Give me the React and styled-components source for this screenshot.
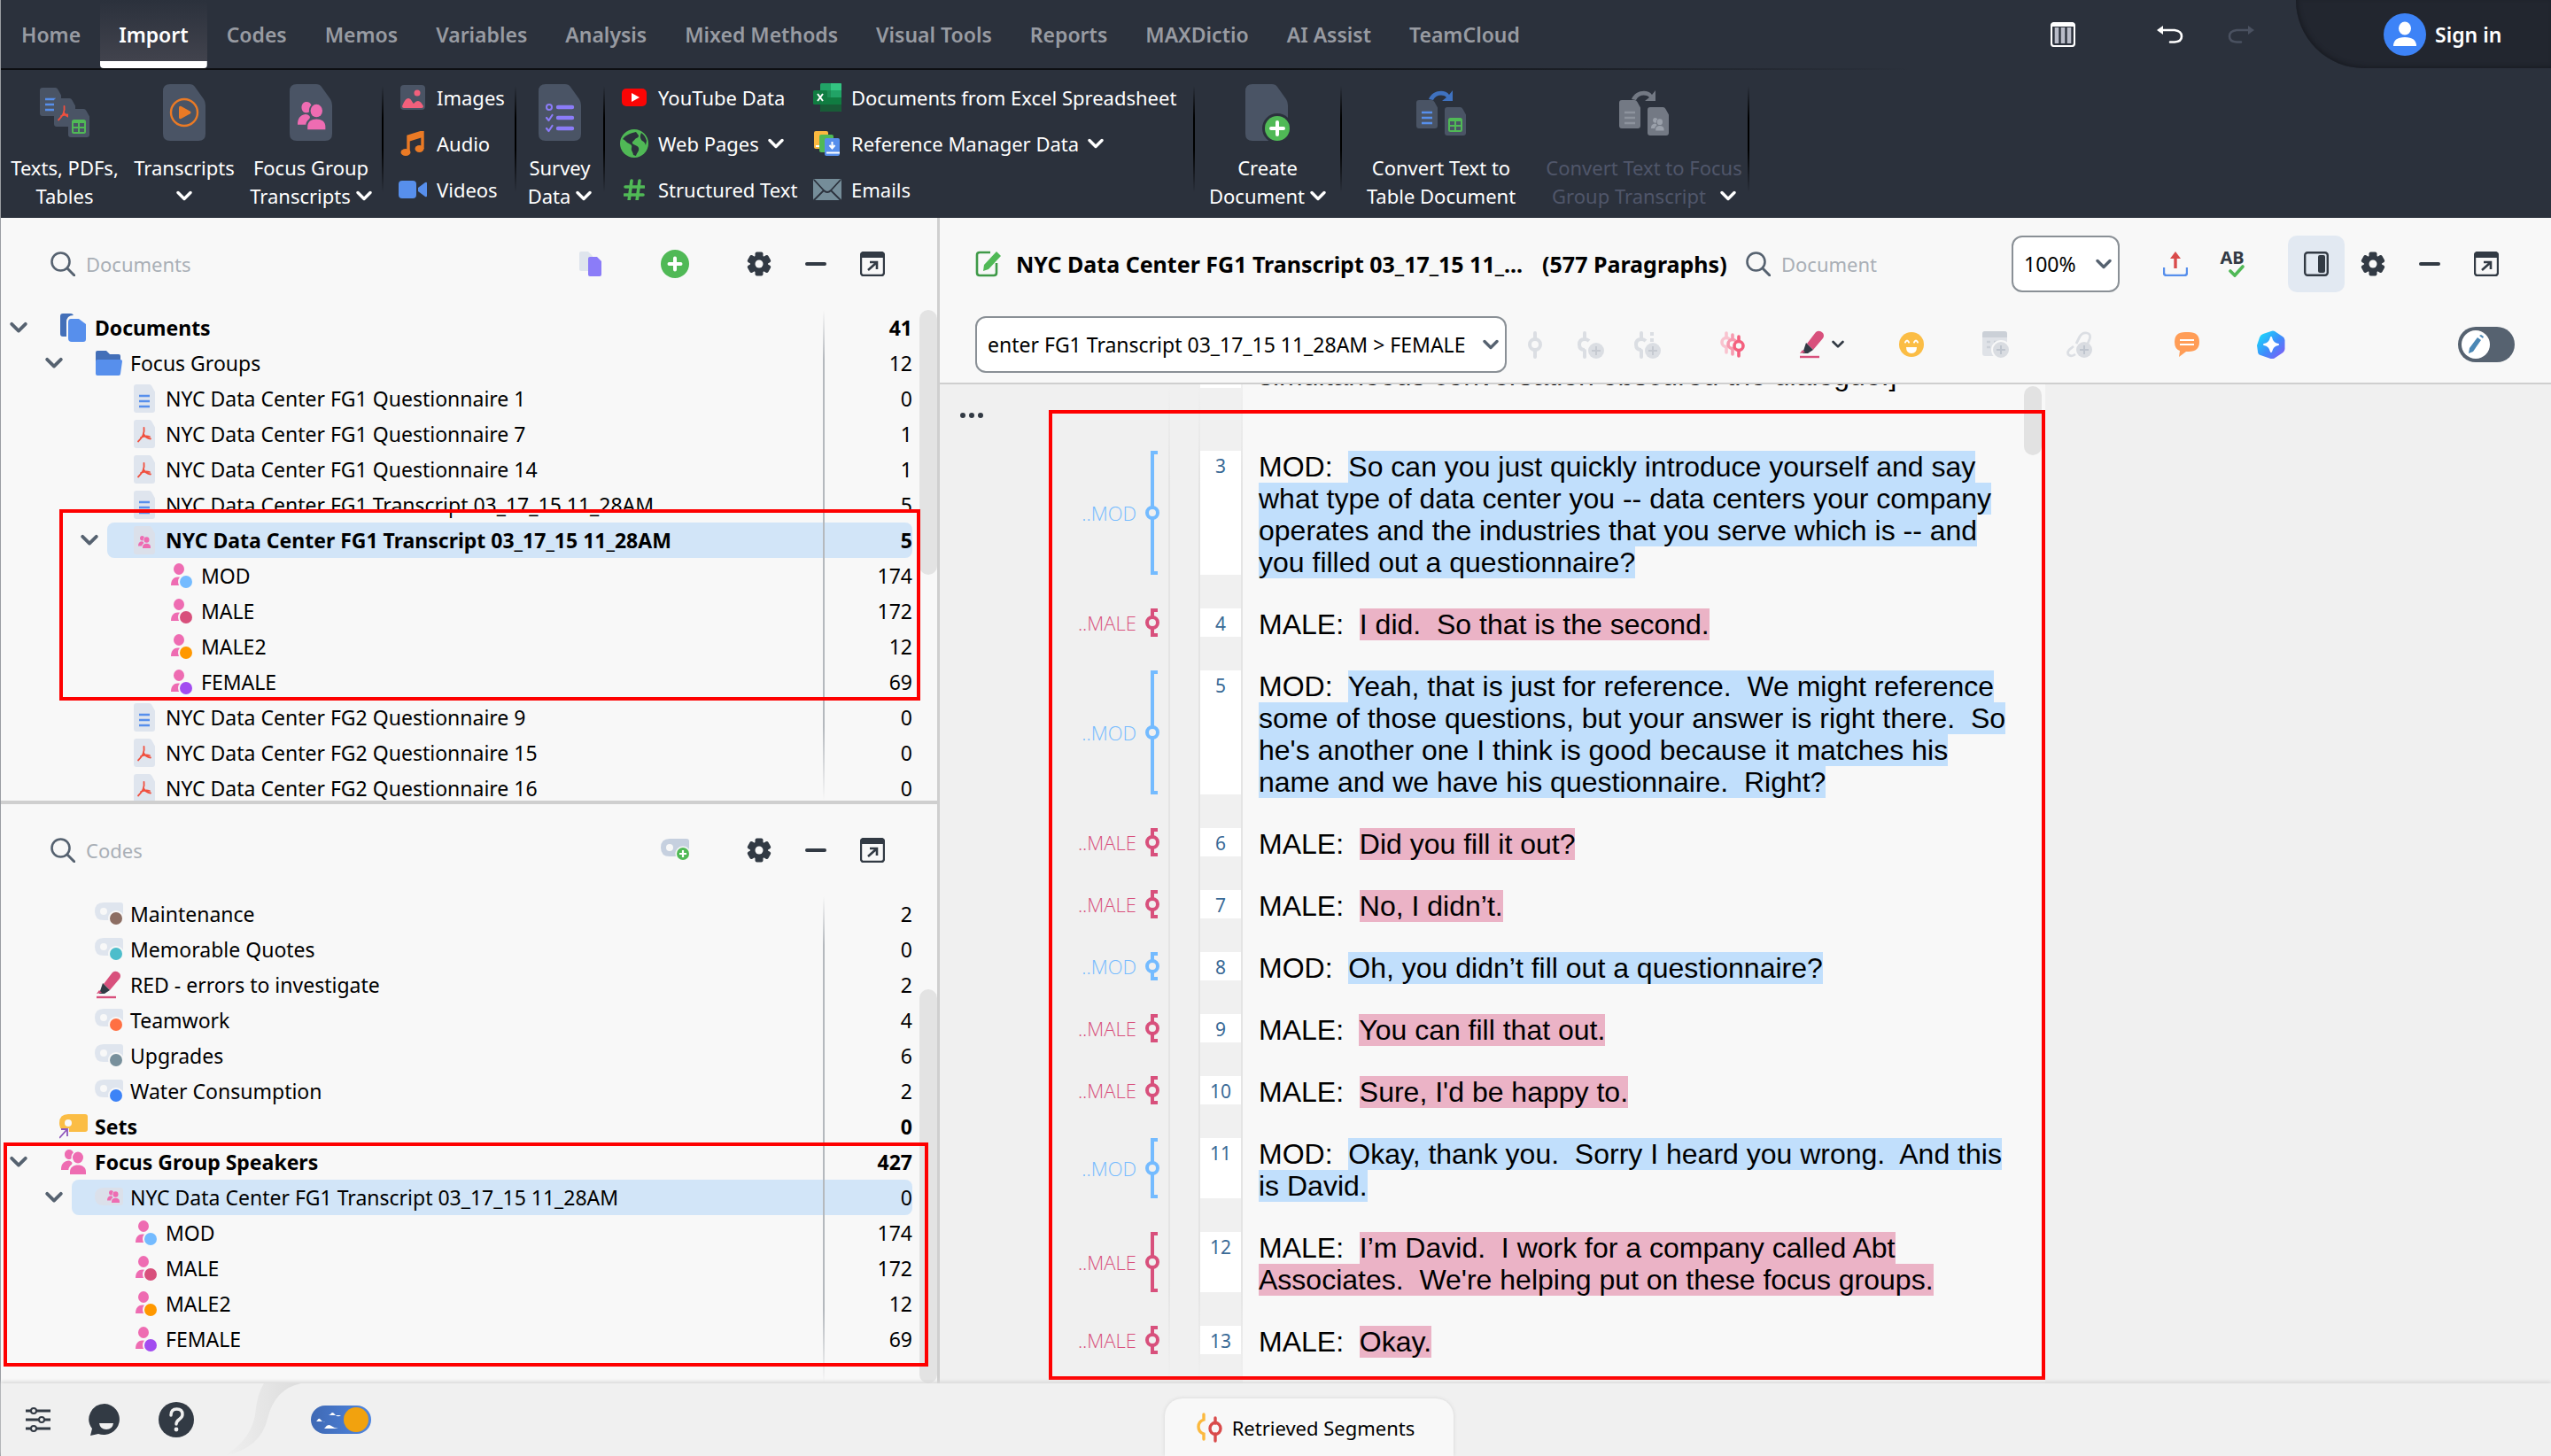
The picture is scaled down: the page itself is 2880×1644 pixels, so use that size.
import styled, { createGlobalStyle, css } from "styled-components";

const UI_FONT = `"Noto Sans", "Open Sans", sans-serif`;

const COLORS = {
  dark: "#2b313c",
  doc: "#4a5465",
  ink: "#323a44",
  slate: "#566270",
  green: "#50b956",
  blue: "#578fec",
  pink: "#ee6cb2",
  mod: "#74bbff",
  male: "#d8507c",
};

const HIGHLIGHTS = {
  MOD: "#c1dffc",
  MALE: "#ebb3c6",
};

const TABS = [
  "Home",
  "Import",
  "Codes",
  "Memos",
  "Variables",
  "Analysis",
  "Mixed Methods",
  "Visual Tools",
  "Reports",
  "MAXDictio",
  "AI Assist",
  "TeamCloud",
];

const SPEAKERS = [
  { label: "MOD", color: COLORS.mod, count: 174 },
  { label: "MALE", color: COLORS.male, count: 172 },
  { label: "MALE2", color: "#ff9800", count: 12 },
  { label: "FEMALE", color: "#a24cf0", count: 69 },
];

const TRANSCRIPT = "NYC Data Center FG1 Transcript 03_17_15 11_28AM";

// a non-breaking space before the ordinary one keeps the double gap after a full stop
const PARAGRAPHS = [
  {
    n: 3,
    who: "MOD",
    text: "So can you just quickly introduce yourself and say what type of data center you -- data centers your company operates and the industries that you serve which is -- and you filled out a questionnaire?",
  },
  { n: 4, who: "MALE", text: "I did.\u00a0 So that is the second." },
  {
    n: 5,
    who: "MOD",
    text: "Yeah, that is just for reference.\u00a0 We might reference some of those questions, but your answer is right there.\u00a0 So he's another one I think is good because it matches his name and we have his questionnaire.\u00a0 Right?",
  },
  { n: 6, who: "MALE", text: "Did you fill it out?" },
  { n: 7, who: "MALE", text: "No, I didn’t." },
  { n: 8, who: "MOD", text: "Oh, you didn’t fill out a questionnaire?" },
  { n: 9, who: "MALE", text: "You can fill that out." },
  { n: 10, who: "MALE", text: "Sure, I'd be happy to." },
  {
    n: 11,
    who: "MOD",
    text: "Okay, thank you.\u00a0 Sorry I heard you wrong.\u00a0 And this is David.",
  },
  {
    n: 12,
    who: "MALE",
    text: "I’m David.\u00a0 I work for a company called Abt Associates.\u00a0 We're helping put on these focus groups.",
  },
  { n: 13, who: "MALE", text: "Okay." },
];

/* ---------- icons ---------- */

const Icon = ({ w = 28, h = w, children, ...rest }) => (
  <svg width={w} height={h} viewBox={`0 0 ${w} ${h}`} fill="none" aria-hidden="true" {...rest}>
    {children}
  </svg>
);

const Chevron = ({ color = "#fff", w = 18 }) => (
  <svg width={w} height={w * 0.67} viewBox="0 0 18 12" fill="none" aria-hidden="true">
    <path d="M2 2.5 9 9.5 16 2.5" stroke={color} strokeWidth="3.4" strokeLinecap="round" strokeLinejoin="round" />
  </svg>
);

const Page = ({ x = 0, y = 0, w = 24, h = 32, fill = COLORS.doc }) => (
  <path
    d={`M${x + 3} ${y}h${w * 0.6}q2 0 3 2l${w * 0.4 - 6} ${h * 0.2}v${h * 0.8 - 5}q0 3-3 3h-${w - 6}q-3 0-3-3v-${h - 6}q0-3 3-3z`}
    fill={fill}
  />
);

const BigPage = () => (
  <path d="M8 0h22q4 0 6 3l10 14q2 3 2 7v32q0 8-8 8H8q-8 0-8-8V8q0-8 8-8z" fill={COLORS.doc} />
);

const Lines = ({ x, y, w = 12, gap = 6, color = COLORS.blue }) => (
  <path d={`M${x} ${y}h${w}M${x} ${y + gap}h${w}M${x} ${y + gap * 2}h${w}`} stroke={color} strokeWidth="2.4" />
);

const PdfMark = ({ x, y }) => (
  <path
    transform={`translate(${x} ${y})`}
    d="M7.5 1c.8 5-1.500 11-6.500 15.500M7 8c1.500 3 4 5 8 5.500M4 12c3-1.500 6-2 10-1"
    stroke="#f0503f"
    strokeWidth="1.8"
    strokeLinecap="round"
  />
);

const Grid = ({ x, y }) => (
  <g transform={`translate(${x} ${y})`}>
    <rect x="1" y="1" width="14" height="14" rx="1.500" stroke={COLORS.green} strokeWidth="2" />
    <path d="M1 3h14M1 9h14M8 2v13" stroke={COLORS.green} strokeWidth="2" />
  </g>
);

const People = ({ color = COLORS.pink }) => (
  <g fill={color}>
    <path d="M9 0c2.400 0 4.200 1.500 4.800 3.400C12 5 11.300 7.200 11.600 10 11 10.700 10 11 9 11 6 11 4 8.600 4 5.500S6 0 9 0z" />
    <ellipse cx="19" cy="9" rx="6" ry="6.500" />
    <path d="M0 23c0-6 2-9.500 8-10.500 1.600 0 3 .6 4 1.800.7 1.200.7 2-.5 3C9.400 19 8.500 20.700 8.300 23z" />
    <path d="M10 28v-3c0-5 4-7.500 9-7.500s9 2.500 9 7.500v3z" />
  </g>
);

const TextsIcon = () => (
  <Icon w={56} h={64}>
    <g transform="translate(0 4)">
      <Page />
      <Lines x={6} y={13} />
      <Page x={16} y={12} />
      <PdfMark x={20} y={20} />
      <Page x={32} y={24} />
      <Grid x={36} y={36} />
    </g>
  </Icon>
);

const TranscriptsIcon = () => (
  <Icon w={48} h={64}>
    <BigPage />
    <circle cx="24" cy="32" r="15" stroke="#ea7a25" strokeWidth="2.400" />
    <path d="M18 26.500q0-2.500 2.500-1.500l10 5.500q2 1.500 0 3l-10 5.500q-2.500 1-2.500-1.500z" fill="#ea7a25" />
  </Icon>
);

const FocusGroupIcon = () => (
  <Icon w={48} h={64}>
    <BigPage />
    <g transform="translate(9 20) scale(1.12)">
      <People />
    </g>
  </Icon>
);

const SurveyIcon = () => (
  <Icon w={48} h={64}>
    <BigPage />
    <g stroke="#8b7cf8" strokeLinecap="round" strokeLinejoin="round">
      <path d="M22 26h16M22 38h16M22 50h16" strokeWidth="4.400" />
      <circle cx="12" cy="26" r="3" strokeWidth="2" />
      <path d="m9 38 2.500 3 4-6M9 50l2.500 3 4-6" strokeWidth="2.200" />
    </g>
  </Icon>
);

const CreateIcon = () => (
  <Icon w={50} h={66}>
    <BigPage />
    <circle cx="36" cy="50" r="17" fill={COLORS.dark} />
    <circle cx="36" cy="50" r="14" fill={COLORS.green} />
    <path d="M36 43v14M29 50h14" stroke="#fff" strokeWidth="4" strokeLinecap="round" />
  </Icon>
);

const ConvertIcon = ({ off }) => (
  <Icon w={56} h={64}>
    <path
      d="M14 17C18 7 32 5 37 12l4-5v12H29l5-4C30 11 22 12 19 18z"
      fill={off ? "#737984" : "#3f72c0"}
    />
    <Page x={0} y={18} fill={off ? "#737984" : COLORS.doc} />
    <Lines x={6} y={32} color={off ? "#8d939d" : COLORS.blue} />
    <Page x={32} y={26} fill={off ? "#737984" : COLORS.doc} />
    {off ? (
      <g transform="translate(36 38) scale(0.52)">
        <People color="#9aa0aa" />
      </g>
    ) : (
      <Grid x={36} y={38} />
    )}
  </Icon>
);

const ImagesIcon = () => (
  <Icon>
    <rect width="28" height="28" rx="4" fill={COLORS.doc} />
    <circle cx="19" cy="9" r="3.500" fill="#f2607c" />
    <path d="M2 24c2-5 4-9 7-9s4 4 6 6c2-2 3-3 5-3s4 2 6 6q0 2-2 2H4q-2 0-2-2z" fill="#f2607c" />
  </Icon>
);

const AudioIcon = () => (
  <Icon>
    <path d="M9 24V6l16-5v19" stroke="#ea7a25" strokeWidth="3.400" />
    <path d="M9 6l16-5v6L9 12z" fill="#ea7a25" />
    <ellipse cx="6" cy="24" rx="5.500" ry="4" fill="#ea7a25" />
    <ellipse cx="21.500" cy="20" rx="5" ry="4" fill="#ea7a25" />
  </Icon>
);

const VideosIcon = () => (
  <Icon w={32} h={28}>
    <rect y="4" width="20" height="20" rx="4" fill={COLORS.blue} />
    <path d="m22 12 8-6q2-1 2 1v14q0 2-2 1l-8-6z" fill={COLORS.blue} />
  </Icon>
);

const YouTubeIcon = () => (
  <Icon>
    <rect y="4" width="28" height="20" rx="5" fill="#fb0505" />
    <path d="m11 9 9 5-9 5z" fill="#fff" />
  </Icon>
);

const GlobeIcon = () => (
  <Icon w={32}>
    <circle cx="16" cy="16" r="16" fill={COLORS.green} />
    <path d="M3 11c3 1 4 4 7 5 2 1 4 2 3 5s2 5 2 8l3 1c1-4 4-5 3-9-1-3-5-3-7-5-1-2 2-3 3-5 2-2 4-1 4-4l-3-4-4 1c-4 1-8 3-11 7zM24 4c-2 4-1 7 1 9 2 1 3 2 4 5l1-5c-1-4-3-7-6-9z" fill={COLORS.dark} />
  </Icon>
);

const HashIcon = () => (
  <Icon w={24}>
    <path d="M2 9h21M1 18h21M9 2 6 25M18 2l-3 23" stroke={COLORS.green} strokeWidth="3.600" strokeLinecap="round" />
  </Icon>
);

const ExcelIcon = () => (
  <Icon w={32}>
    <rect x="8" width="24" height="32" rx="1.500" fill="#21a366" />
    <path d="M20 0h11q1 0 1 1v7H20z" fill="#33c481" />
    <path d="M8 16h24v8H8z" fill="#107c41" />
    <path d="M8 24h24v7q0 1-1 1H9q-1 0-1-1z" fill="#185c37" />
    <path d="M8 8h12v8H8z" fill="#1e8e55" />
    <rect y="8" width="16" height="16" rx="1.500" fill="#107c41" />
    <path d="m5 12 6 8M11 12l-6 8" stroke="#fff" strokeWidth="2" />
  </Icon>
);

const RefManagerIcon = () => (
  <Icon w={30} h={28}>
    <rect width="16" height="20" rx="2" fill="#fbb93f" />
    <path d="M2 17h5" stroke="#fff" strokeWidth="2" />
    <rect x="6" y="4" width="16" height="20" rx="2" fill={COLORS.green} />
    <rect x="12" y="8" width="17" height="20" rx="2" fill={COLORS.blue} />
    <path d="M14 24.500h15" stroke="#fff" strokeWidth="2" />
    <path d="M20.500 12v7m-3-3 3 3.500 3-3.500" stroke="#fff" strokeWidth="2" />
  </Icon>
);

const MailIcon = () => (
  <Icon w={32} h={24}>
    <rect width="32" height="24" rx="2" fill="#758d99" />
    <path d="m1 1 11 12q4 4 8 0L31 1M1 24l11-11M31 24 20 13" stroke={COLORS.dark} strokeWidth="1.800" />
  </Icon>
);

const SearchIcon = () => (
  <Icon>
    <circle cx="11.500" cy="11.500" r="10" stroke={COLORS.slate} strokeWidth="2.600" />
    <path d="m19 19 8 8" stroke={COLORS.slate} strokeWidth="3" strokeLinecap="round" />
  </Icon>
);

const GearIcon = () => (
  <Icon>
    <g fill={COLORS.ink}>
      <circle cx="14" cy="14" r="10" />
      {[0, 60, 120].map((a) => (
        <rect key={a} x="9.500" y="0.500" width="9" height="27" rx="2" transform={`rotate(${a} 14 14)`} />
      ))}
    </g>
    <circle cx="14" cy="14" r="4.500" fill="#f8f8f8" />
  </Icon>
);

const MinusIcon = () => (
  <Icon w={24} h={28}>
    <path d="M2 14h20" stroke={COLORS.ink} strokeWidth="4" strokeLinecap="round" />
  </Icon>
);

const PopOutIcon = () => (
  <Icon>
    <rect x="1" y="1" width="26" height="26" rx="3" stroke={COLORS.ink} strokeWidth="2.400" />
    <path d="M1 3q0-2 2-2h22q2 0 2 2v4H1z" fill={COLORS.ink} />
    <path d="m9 21 9-8M11 12h8v8" stroke={COLORS.ink} strokeWidth="2.600" />
  </Icon>
);

const PlusIcon = () => (
  <Icon w={32}>
    <circle cx="16" cy="16" r="16" fill={COLORS.green} />
    <path d="M16 9.500v13M9.500 16h13" stroke="#fff" strokeWidth="4" strokeLinecap="round" />
  </Icon>
);

const PairIcon = () => (
  <Icon w={26} h={28}>
    <path d="M2 0h8l5 5v17H2q-2 0-2-2V2q0-2 2-2z" fill="#dfe5ed" />
    <path d="M12 6h8l5 5v15q0 2-2 2H12q-2 0-2-2V8q0-2 2-2z" fill="#8b7cf8" />
  </Icon>
);

const DocumentsIcon = () => (
  <Icon w={30} h={32}>
    <path d="M0 3q0-3 3-3h9q2 0 3 2-8 0-8 8v16H3q-3 0-3-3z" fill="#436fb8" />
    <path d="M12 6h9l8 6v17q0 3-3 3H13q-4 0-4-4V10q0-4 3-4z" fill={COLORS.blue} />
  </Icon>
);

const FolderIcon = () => (
  <Icon w={30} h={28}>
    <path d="M0 2q0-2 2-2h10l4 4h10q2 0 2 2v20H0z" fill="#436fb8" />
    <path d="M2 10h26q2 0 2 2l-2 14q0 2-2 2H2q-2 0-2-2V12q0-2 2-2z" fill={COLORS.blue} />
  </Icon>
);

const TextDocIcon = () => (
  <Icon w={24} h={32}>
    <Page fill="#dfe5ee" />
    <Lines x={6} y={13} gap={6} />
  </Icon>
);

const PdfDocIcon = () => (
  <Icon w={24} h={32}>
    <Page fill="#dfe5ee" />
    <PdfMark x={4} y={8} />
  </Icon>
);

const GroupDocIcon = () => (
  <Icon w={24} h={32}>
    <Page fill="#dbe0ea" />
    <g transform="translate(5 11) scale(0.5)">
      <People />
    </g>
  </Icon>
);

const SpeakerIcon = ({ color }) => (
  <Icon w={28}>
    <ellipse cx="13" cy="6.500" rx="6" ry="6.500" fill={COLORS.pink} />
    <path d="M4 25c0-5 2-9.500 8-9.500 3 0 5 1 6 3V25z" fill={COLORS.pink} />
    <circle cx="21" cy="21" r="9" fill="#f8f8f8" />
    <circle cx="21" cy="21" r="7" fill={color} />
  </Icon>
);

const Tag = ({ fill = "#dfe5ee" }) => (
  <path d="M10 0h19q3 0 3 3v14q0 3-3 3H10Q0 20 0 10T10 0z" fill={fill} />
);

const CodeIcon = ({ color }) => (
  <Icon w={32} h={26}>
    <Tag />
    <circle cx="10" cy="10" r="4" fill="#f8f8f8" />
    <circle cx="24" cy="18" r="9" fill="#f8f8f8" />
    <circle cx="24" cy="18" r="7" fill={color} />
  </Icon>
);

const NewCodeIcon = () => (
  <Icon w={32} h={26}>
    <Tag fill="#c6d0df" />
    <circle cx="10" cy="10" r="4" fill="#f8f8f8" />
    <circle cx="25" cy="17" r="8.500" fill="#f8f8f8" />
    <circle cx="25" cy="17" r="7" fill={COLORS.green} />
    <path d="M25 13v8M21 17h8" stroke="#fff" strokeWidth="2.200" />
  </Icon>
);

const SetsIcon = () => (
  <Icon w={32} h={28}>
    <Tag fill="#fbbd45" />
    <circle cx="10" cy="10" r="4" fill="#f8f8f8" />
    <path d="M0 16h11v12H0z" fill="#f8f8f8" />
    <path d="m0 27 8-9M2 17h7v8" stroke="#8d55bb" strokeWidth="1.800" />
  </Icon>
);

const GroupCodeIcon = () => (
  <Icon w={32} h={22}>
    <Tag fill="#dbe0ea" />
    <g transform="translate(14 3) scale(0.5)">
      <People />
    </g>
  </Icon>
);

const PeopleIcon = () => (
  <Icon>
    <People />
  </Icon>
);

const MarkerIcon = () => (
  <Icon w={28} h={32}>
    <path d="M18 2q4-3 8 1 2 3 0 6L15 22 8 15z" fill={COLORS.male} />
    <path d="m7 14 8 8-6 4H3z" fill={COLORS.ink} />
    <path d="m3 22 3 3-6 1z" fill={COLORS.male} />
    <path d="M0 30h22" stroke={COLORS.male} strokeWidth="2.400" />
  </Icon>
);

const EditIcon = () => (
  <Icon w={30} h={30}>
    <path d="M17 2H5Q2 2 2 5v20q0 3 3 3h16q3 0 3-3V14" stroke="#3f9a48" strokeWidth="2.600" />
    <path d="m24 1 5 5-14 15-6 2 1-7z" fill={COLORS.green} />
  </Icon>
);

const ExportIcon = () => (
  <Icon>
    <path d="M1 18v6q0 3 3 3h20q3 0 3-3v-6" stroke={COLORS.blue} strokeWidth="2.400" />
    <path d="M14 19V6" stroke="#d94b4b" strokeWidth="3.400" />
    <path d="m14 0 6 8H8z" fill="#d94b4b" />
  </Icon>
);

const CheckMark = () => (
  <Icon w={18} h={14}>
    <path d="m2 7 5 5 9-10" stroke={COLORS.green} strokeWidth="3.600" strokeLinecap="round" />
  </Icon>
);

const SidePaneIcon = () => (
  <Icon>
    <rect x="1.200" y="1.200" width="25.600" height="25.600" rx="3" stroke={COLORS.ink} strokeWidth="2.400" />
    <rect x="16" y="4" width="8" height="20" rx="2" fill={COLORS.ink} />
  </Icon>
);

const PinIcon = ({ plus, dots }) => (
  <Icon w={plus ? 32 : 16} h={32}>
    <g stroke="#dbdee3" strokeWidth="4">
      <path d="M8 3v6M8 23v7" strokeLinecap="round" />
      {plus ? <path d="M13 12q-2-2-5-2-6 0-6 6t6 6" /> : <circle cx="8" cy="16" r="6" />}
      {dots && <path d="M20 2v11" strokeDasharray="4 3" />}
    </g>
    {plus && (
      <g>
        <circle cx="21" cy="23" r="9" fill="#dbdee3" />
        <path d="M21 18v10M16 23h10" stroke="#c6cad1" strokeWidth="2" />
      </g>
    )}
  </Icon>
);

const RedPinsIcon = () => (
  <Icon w={28} h={30}>
    {[
      [7, 0, "#f9c3cf"],
      [14, 2, "#f79bb0"],
      [21, 4, "#f4607e"],
    ].map(([x, y, c]) => (
      <g key={x} transform={`translate(${x} ${y})`} stroke={c} strokeWidth="3.600" strokeLinecap="round">
        <path d="M0 2v5M0 18v6" />
        <circle cy="12.500" r="5" fill="#f8f8f8" />
      </g>
    ))}
  </Icon>
);

const SmileIcon = () => (
  <Icon>
    <circle cx="14" cy="14" r="14" fill="#fbbd45" />
    <path d="M7 11.500q2-4 4 0M17 11.500q2-4 4 0" stroke="#fff" strokeWidth="2" strokeLinecap="round" />
    <path d="M8 17h12q0 7-6 7t-6-7z" fill="#fff" />
  </Icon>
);

const TableAddIcon = () => (
  <Icon w={30} h={30}>
    <rect width="28" height="28" rx="3" fill="#dfe2e7" />
    <path d="M0 3q0-3 3-3h22q3 0 3 3v4H0z" fill="#cbd0d7" />
    <path d="M5 12h4M5 18h4M13 12h10" stroke="#cbd0d7" strokeWidth="2.400" />
    <circle cx="21" cy="21" r="10" fill="#d9dce1" stroke="#f8f8f8" strokeWidth="2" />
    <path d="M21 16v10M16 21h10" stroke="#bfc5ce" strokeWidth="2" />
  </Icon>
);

const LinkAddIcon = () => (
  <Icon w={30} h={30}>
    <path d="m11 14 4-8q3-5 8-4t3 7l-2 5M8 17l-5 4q-3 4 0 6t7-1" stroke="#dbdee3" strokeWidth="2.800" />
    <circle cx="20" cy="21" r="9" fill="#d9dce1" />
    <path d="M20 16v10M15 21h10" stroke="#bfc5ce" strokeWidth="2" />
  </Icon>
);

const CommentIcon = () => (
  <Icon w={28} h={28}>
    <path d="M12 0h4q12 0 12 11T16 22h-3l-8 6 1-7Q0 19 0 11 0 0 12 0z" fill="#ff9d57" />
    <path d="M6 9h16M6 14h16" stroke="#fff" strokeWidth="2.200" />
  </Icon>
);

const AiIcon = () => (
  <Icon w={32} h={32}>
    <defs>
      <linearGradient id="ai" x1="0" y1="0" x2="1" y2="1">
        <stop offset="0.100" stopColor="#19d8fb" />
        <stop offset="0.550" stopColor="#3f8cfb" />
        <stop offset="1" stopColor="#8b55f5" />
      </linearGradient>
    </defs>
    <path d="M16 1q2-1 4 0l9 6q2 1 2.500 4v10q0 2-2 4l-9 6q-2 1.500-5 1L4 28q-3-1-3-4L0 17 3 8q1-3 4-4z" fill="url(#ai)" />
    <path d="M16 8q1.500 7 8 8-6.500 1-8 8-1.500-7-8-8 6.500-1 8-8z" fill="#fff" stroke="#fff" strokeWidth="2" strokeLinejoin="round" />
  </Icon>
);

const ShelfIcon = () => (
  <Icon>
    <rect x="1" y="1" width="26" height="26" rx="3" stroke="#fff" strokeWidth="2.200" />
    <path d="M1 3h26" stroke="#fff" strokeWidth="4" />
    <path d="M7 6v18M14 6v18M21 6v18" stroke="#b9bcc8" strokeWidth="4.600" />
  </Icon>
);

const UndoIcon = ({ color = "#fff", flip }) => (
  <Icon w={30} h={20}>
    <g transform={flip ? "matrix(-1 0 0 1 30 0)" : undefined}>
      <path d="M3 5h17q8 1 8 7t-8 6.500h-5" stroke={color} strokeWidth="2.600" strokeLinecap="round" />
      <path d="M7 0v10L0 5z" fill={color} />
    </g>
  </Icon>
);

const AvatarIcon = () => (
  <Icon w={48}>
    <circle cx="24" cy="24" r="24" fill="#3d83f7" />
    <ellipse cx="24" cy="17" rx="7" ry="7.500" fill="#fff" />
    <path d="M11 37q0-10 13-10t13 10z" fill="#fff" />
  </Icon>
);

const SlidersIcon = () => (
  <Icon>
    <path d="M0 4h28M0 14h28M0 24h28" stroke={COLORS.ink} strokeWidth="3" />
    {[
      [9, 4],
      [18, 14],
      [9, 24],
    ].map(([x, y]) => (
      <circle key={y} cx={x} cy={y} r="3" fill="#f0f0f0" stroke={COLORS.ink} strokeWidth="2" />
    ))}
  </Icon>
);

const ChatIcon = () => (
  <Icon w={36} h={36}>
    <path d="M18 0a18 17.500 0 1 1-7 34l-9 2 2-8A18 17.500 0 0 1 18 0z" fill={COLORS.ink} />
    <path d="M12 22h16q-1 7-8 7t-8-7z" fill="#f0f0f0" />
  </Icon>
);

const HelpIcon = () => (
  <Icon w={40}>
    <circle cx="20" cy="20" r="20" fill={COLORS.ink} />
    <path d="M14 15q0-7 6.500-7t6.500 6q0 3-3.500 5.500T20 25" stroke="#f0f0f0" strokeWidth="3.400" strokeLinecap="round" />
    <circle cx="20" cy="31" r="2.400" fill="#f0f0f0" />
  </Icon>
);

const CurveIcon = () => (
  <svg width="92" height="82" viewBox="0 0 92 82" fill="none" aria-hidden="true">
    <defs>
      <linearGradient id="curve" x1="0" y1="0" x2="1" y2="0">
        <stop offset="0" stopColor="#f0f0f0" />
        <stop offset="1" stopColor="#dcdcdc" />
      </linearGradient>
    </defs>
    <path d="M50 0h42Q62 6 54 40 46 74 4 82 34 66 40 36 42 12 50 0z" fill="url(#curve)" />
  </svg>
);

const SegmentsIcon = () => (
  <Icon w={30} h={34}>
    <path d="M8 2v6Q2 10 2 16t6 8v6" stroke="#fbb93f" strokeWidth="3.400" strokeLinecap="round" />
    <path d="M21 6v6M21 24v8" stroke="#d94b4b" strokeWidth="3.400" strokeLinecap="round" />
    <ellipse cx="21" cy="18" rx="6" ry="6.500" stroke="#d94b4b" strokeWidth="3.400" />
  </Icon>
);

const MoreIcon = () => (
  <Icon w={28} h={8}>
    {[4, 14, 24].map((x) => (
      <circle key={x} cx={x} cy="4" r="3" fill={COLORS.ink} />
    ))}
  </Icon>
);

/* ---------- data that needs icons ---------- */

const documentRows = [
  { level: 0, label: "Documents", count: 41, icon: <DocumentsIcon />, open: true, bold: true },
  { level: 1, label: "Focus Groups", count: 12, icon: <FolderIcon />, open: true },
  { level: 2, label: "NYC Data Center FG1 Questionnaire 1", count: 0, icon: <TextDocIcon /> },
  { level: 2, label: "NYC Data Center FG1 Questionnaire 7", count: 1, icon: <PdfDocIcon /> },
  { level: 2, label: "NYC Data Center FG1 Questionnaire 14", count: 1, icon: <PdfDocIcon /> },
  { level: 2, label: TRANSCRIPT, count: 5, icon: <TextDocIcon /> },
];

const documentSpeakers = [
  { level: 2, label: TRANSCRIPT, count: 5, icon: <GroupDocIcon />, open: true, bold: true, selected: true },
  ...SPEAKERS.map((s) => ({ ...s, level: 3, icon: <SpeakerIcon color={s.color} /> })),
];

const documentRowsAfter = [
  { level: 2, label: "NYC Data Center FG2 Questionnaire 9", count: 0, icon: <TextDocIcon /> },
  { level: 2, label: "NYC Data Center FG2 Questionnaire 15", count: 0, icon: <PdfDocIcon /> },
  { level: 2, label: "NYC Data Center FG2 Questionnaire 16", count: 0, icon: <PdfDocIcon /> },
];

const codeRows = [
  { level: 1, label: "Maintenance", count: 2, icon: <CodeIcon color="#8d6e63" /> },
  { level: 1, label: "Memorable Quotes", count: 0, icon: <CodeIcon color="#4dbdcb" /> },
  { level: 1, label: "RED - errors to investigate", count: 2, icon: <MarkerIcon /> },
  { level: 1, label: "Teamwork", count: 4, icon: <CodeIcon color="#ff7043" /> },
  { level: 1, label: "Upgrades", count: 6, icon: <CodeIcon color="#78909c" /> },
  { level: 1, label: "Water Consumption", count: 2, icon: <CodeIcon color="#3d83f7" /> },
  { level: 0, label: "Sets", count: 0, icon: <SetsIcon />, bold: true },
];

const codeSpeakers = [
  { level: 0, label: "Focus Group Speakers", count: 427, icon: <PeopleIcon />, open: true, bold: true },
  { level: 1, label: TRANSCRIPT, count: 0, icon: <GroupCodeIcon />, open: true, selected: true },
  ...SPEAKERS.map((s) => ({ ...s, level: 2, icon: <SpeakerIcon color={s.color} /> })),
];

/* ---------- parts ---------- */

function Tree({ rows }) {
  return rows.map((row) => (
    <TreeRow key={row.label + row.level} $level={row.level} role="treeitem" aria-selected={!!row.selected}>
      <Expander>
        {row.open && (
          <PlainButton aria-label={`Collapse ${row.label}`}>
            <Chevron color={COLORS.slate} w={20} />
          </PlainButton>
        )}
      </Expander>
      <RowBody $selected={row.selected} $bold={row.bold}>
        <RowIcon>{row.icon}</RowIcon>
        <RowLabel>{row.label}</RowLabel>
        <span>{row.count}</span>
      </RowBody>
    </TreeRow>
  ));
}

function PanelHeader({ name, children }) {
  return (
    <ToolRow $indent={56}>
      <Search name={name} />
      <Spacer />
      {children}
      <SlotGroup>
        <Slot aria-label={`${name} settings`}>
          <GearIcon />
        </Slot>
        <Slot aria-label={`Minimize ${name}`}>
          <MinusIcon />
        </Slot>
        <Slot aria-label={`Open ${name} in window`}>
          <PopOutIcon />
        </Slot>
      </SlotGroup>
    </ToolRow>
  );
}

function Search({ name }) {
  return (
    <SearchLabel>
      <SearchIcon />
      <input type="search" placeholder={name} aria-label={`Search ${name}`} />
    </SearchLabel>
  );
}

function RibbonItem({ icon, lines, width, arrow, off }) {
  return (
    <BigButton $width={width} $off={off} disabled={off}>
      <BigIcon>{icon}</BigIcon>
      <span>{lines[0]}</span>
      <span>
        {lines[1]}
        {arrow && <Chevron />}
      </span>
    </BigButton>
  );
}

function SmallItems({ items, width }) {
  return (
    <SmallColumn $width={width}>
      {items.map(([label, icon, arrow]) => (
        <SmallButton key={label}>
          <SmallIcon>{icon}</SmallIcon>
          {label}
          {arrow && <Chevron />}
        </SmallButton>
      ))}
    </SmallColumn>
  );
}

export default function App() {
  return (
    <Shell>
      <GlobalStyle />
      <MenuBar>
        {TABS.map((tab) => (
          <MenuTab key={tab} $active={tab === "Import"}>
            {tab}
          </MenuTab>
        ))}
        <Spacer />
        <TopActions>
          <PlainButton aria-label="Panels">
            <ShelfIcon />
          </PlainButton>
          <PlainButton aria-label="Undo">
            <UndoIcon />
          </PlainButton>
          <PlainButton aria-label="Redo">
            <UndoIcon color="#4a5160" flip />
          </PlainButton>
        </TopActions>
        <SignIn>
          <AvatarIcon />
          Sign in
        </SignIn>
      </MenuBar>

      <Ribbon>
        <RibbonItem icon={<TextsIcon />} lines={["Texts, PDFs,", "Tables"]} width={144} />
        <RibbonItem icon={<TranscriptsIcon />} lines={["Transcripts", ""]} width={126} arrow />
        <RibbonItem icon={<FocusGroupIcon />} lines={["Focus Group", "Transcripts"]} width={160} arrow />
        <Divider />
        <SmallItems
          width={148}
          items={[
            ["Images", <ImagesIcon />],
            ["Audio", <AudioIcon />],
            ["Videos", <VideosIcon />],
          ]}
        />
        <Divider />
        <RibbonItem icon={<SurveyIcon />} lines={["Survey", "Data"]} width={98} arrow />
        <Divider />
        <SmallItems
          width={218}
          items={[
            ["YouTube Data", <YouTubeIcon />],
            ["Web Pages", <GlobeIcon />, true],
            ["Structured Text", <HashIcon />],
          ]}
        />
        <SmallItems
          width={446}
          items={[
            ["Documents from Excel Spreadsheet", <ExcelIcon />],
            ["Reference Manager Data", <RefManagerIcon />, true],
            ["Emails", <MailIcon />],
          ]}
        />
        <Divider />
        <RibbonItem icon={<CreateIcon />} lines={["Create", "Document"]} width={164} arrow />
        <Divider />
        <RibbonItem icon={<ConvertIcon />} lines={["Convert Text to", "Table Document"]} width={224} />
        <RibbonItem icon={<ConvertIcon off />} lines={["Convert Text to Focus", "Group Transcript"]} width={234} arrow off />
        <Divider />
      </Ribbon>

      <Workspace>
        <LeftColumn>
          <Panel>
            <PanelHeader name="Documents">
              <Slot $after={31} aria-label="Activate documents">
                <PairIcon />
              </Slot>
              <Slot $after={31} aria-label="Add document">
                <PlusIcon />
              </Slot>
            </PanelHeader>
            <TreeArea>
              <TreeList role="tree" aria-label="Documents">
                <Tree rows={documentRows} />
                <Marked $inset="-15px 19px -1px 66px">
                  <Tree rows={documentSpeakers} />
                </Marked>
                <Tree rows={documentRowsAfter} />
              </TreeList>
              <ScrollThumb $top="0" $height="54%" />
            </TreeArea>
          </Panel>
          <Panel $split>
            <PanelHeader name="Codes">
              <Slot $after={31} aria-label="New code">
                <NewCodeIcon />
              </Slot>
            </PanelHeader>
            <TreeArea>
              <TreeList role="tree" aria-label="Codes">
                <Tree rows={codeRows} />
                <Marked $inset="-2px 10px -11px 3px">
                  <Tree rows={codeSpeakers} />
                </Marked>
              </TreeList>
              <ScrollThumb $top="19%" $height="81%" />
            </TreeArea>
          </Panel>
        </LeftColumn>

        <Browser>
          <BrowserTools>
            <ToolRow $indent={40}>
              <EditIcon />
              <DocTitle>
                <span>NYC Data Center FG1 Transcript 03_17_15 11_...</span>
                <span>(577 Paragraphs)</span>
              </DocTitle>
              <Search name="Document" />
              <Spacer />
              <SelectBox $width={122}>
                <select aria-label="Zoom" defaultValue="100%">
                  <option>100%</option>
                </select>
                <Chevron color={COLORS.slate} w={18} />
              </SelectBox>
              <SlotGroup $before={31} $after={31}>
                <Slot aria-label="Export">
                  <ExportIcon />
                </Slot>
                <Slot aria-label="Check spelling">
                  <SpellMark>
                    AB
                    <CheckMark />
                  </SpellMark>
                </Slot>
              </SlotGroup>
              <SlotGroup>
                <Slot $on aria-pressed="true" aria-label="Sidebar">
                  <SidePaneIcon />
                </Slot>
                <Slot aria-label="Document settings">
                  <GearIcon />
                </Slot>
                <Slot aria-label="Minimize document">
                  <MinusIcon />
                </Slot>
                <Slot aria-label="Open document in window">
                  <PopOutIcon />
                </Slot>
              </SlotGroup>
            </ToolRow>
            <ToolRow $indent={40} $short>
              <SelectBox $width={600}>
                <select aria-label="Code" defaultValue="female">
                  <option value="female">enter FG1 Transcript 03_17_15 11_28AM &gt; FEMALE</option>
                </select>
                <Chevron color={COLORS.slate} w={18} />
              </SelectBox>
              <Slot disabled aria-label="Code segment">
                <PinIcon />
              </Slot>
              <Slot disabled aria-label="Code with new code">
                <PinIcon plus />
              </Slot>
              <Slot disabled $after={31} aria-label="Code in vivo">
                <PinIcon plus dots />
              </Slot>
              <Slot $after={31} aria-label="Remove codings">
                <RedPinsIcon />
              </Slot>
              <Slot $wide $after={31} aria-label="Highlight color">
                <MarkerIcon />
                <Chevron color={COLORS.ink} w={14} />
              </Slot>
              <Slot $after={31} aria-label="Emoticode">
                <SmileIcon />
              </Slot>
              <Slot disabled $after={31} aria-label="Add memo">
                <TableAddIcon />
              </Slot>
              <Slot disabled $after={57} aria-label="Add link">
                <LinkAddIcon />
              </Slot>
              <Slot $after={31} aria-label="Comment">
                <CommentIcon />
              </Slot>
              <Slot aria-label="AI Assist">
                <AiIcon />
              </Slot>
              <Spacer />
              <EditSwitch>
                <input type="checkbox" role="switch" aria-label="Edit mode" />
                <Icon w={32}>
                  <circle cx="16" cy="16" r="16" fill="#fff" />
                  <path d="m18 8 4 3-9 13-5 2 1-6zM20 6l2-1 3 2-1 2z" fill="#4a87b5" />
                </Icon>
              </EditSwitch>
            </ToolRow>
          </BrowserTools>

          <DocArea>
            <Sheet>
              <MoreButton aria-label="More">
                <MoreIcon />
              </MoreButton>
              <PrevRow>
                <ParaNumber />
                <PrevText>simultaneous conversation obscured the dialogue.]</PrevText>
              </PrevRow>
              {PARAGRAPHS.map((p) => (
                <ParaRow key={p.n}>
                  <CodeStripe $color={p.who === "MOD" ? COLORS.mod : COLORS.male}>
                    <span>..{p.who}</span>
                    <Bracket />
                  </CodeStripe>
                  <ParaNumber>{p.n}</ParaNumber>
                  <ParaText>
                    {p.who}:{"\u00a0 "}
                    <Coded $color={HIGHLIGHTS[p.who]}>{p.text}</Coded>
                  </ParaText>
                </ParaRow>
              ))}
              <DocThumb />
              <DocFrame />
            </Sheet>
          </DocArea>
        </Browser>
      </Workspace>

      <StatusBar>
        <PlainButton aria-label="Preferences">
          <SlidersIcon />
        </PlainButton>
        <PlainButton aria-label="Feedback">
          <ChatIcon />
        </PlainButton>
        <PlainButton aria-label="Help">
          <HelpIcon />
        </PlainButton>
        <CurveIcon />
        <DaySwitch>
          <input type="checkbox" role="switch" aria-label="Light theme" defaultChecked />
          <Icon w={68} h={32}>
            <path d="M22 10q2-4 5 0t7 1H20zM7 17q2-4 4-1t5 2H6zM16 25q3-5 7-2t8 3H15z" fill="#fff" />
            <circle cx="51" cy="16" r="14" fill="#f2a20e" />
          </Icon>
        </DaySwitch>
        <SegmentsTab>
          <SegmentsIcon />
          Retrieved Segments
        </SegmentsTab>
      </StatusBar>
    </Shell>
  );
}

/* ---------- styles ---------- */

const GlobalStyle = createGlobalStyle`
  *, *::before, *::after { box-sizing: border-box; }

  body {
    margin: 0;
    font-family: ${UI_FONT};
    font-size: 22px;
    color: #000;
    background: #f0f0f0;
  }

  button, input, select {
    font: inherit;
    color: inherit;
  }

  svg { flex: none; display: block; }
`;

const Shell = styled.div`
  display: grid;
  grid-template-rows: 79px 167px minmax(0, 1fr) 82px;
  height: 100vh;
  border-left: 1px solid #9a9da2;
`;

const Spacer = styled.div`
  flex: 1;
`;

const PlainButton = styled.button`
  display: flex;
  align-items: center;
  padding: 0;
  border: 0;
  background: none;
`;

const MenuBar = styled.nav`
  display: flex;
  gap: 1px;
  padding-left: 2px;
  color: #989ba2;
  font-size: 23px;
  font-weight: 600;
  background:
    linear-gradient(to right, #0d0f12 50%, transparent 75%) bottom / 100% 2px no-repeat,
    ${COLORS.dark};
`;

const MenuTab = styled.button`
  height: 77px;
  padding: 0 21px;
  border: 0;
  background: none;
  white-space: nowrap;

  ${(p) =>
    p.$active &&
    css`
      color: #fff;
      border-radius: 0 0 4px 4px;
      background:
        linear-gradient(#fff, #fff) bottom / 100% 8px no-repeat,
        linear-gradient(${COLORS.dark}, #44454f);
    `}
`;

const TopActions = styled.div`
  display: flex;
  align-items: center;
  gap: 50px;
  height: 77px;
  padding-right: 46px;

  & > :first-child {
    margin-right: 42px;
  }
`;

const SignIn = styled.button`
  display: flex;
  align-items: center;
  gap: 10px;
  width: 288px;
  height: 77px;
  padding: 0 0 0 99px;
  border: 0;
  border-bottom-left-radius: 80px;
  color: #fff;
  background: #22262f;
  box-shadow: inset 2px -2px 4px #1a1d24;
`;

const Ribbon = styled.div`
  display: flex;
  align-items: flex-start;
  color: #fff;
  background: ${COLORS.dark};
`;

const Divider = styled.div`
  width: 2px;
  height: 120px;
  margin-top: 18px;
  background: linear-gradient(transparent, #000 30%, #000 60%, transparent);
`;

const BigButton = styled.button`
  display: flex;
  flex-direction: column;
  align-items: center;
  width: ${(p) => p.$width}px;
  padding: 16px 0 0;
  border: 0;
  color: ${(p) => (p.$off ? "#50566a" : "#fff")};
  background: none;
  white-space: nowrap;

  span {
    display: flex;
    align-items: center;
    gap: ${(p) => (p.$off ? 16 : 6)}px;
    height: 32px;
  }
`;

const BigIcon = styled.div`
  height: 64px;
  margin-bottom: 14px;
`;

const SmallColumn = styled.div`
  width: ${(p) => p.$width}px;
  padding: 5px 0 0 16px;
`;

const SmallButton = styled.button`
  display: flex;
  align-items: center;
  gap: 10px;
  height: 52px;
  padding: 0;
  border: 0;
  background: none;
  white-space: nowrap;
`;

const SmallIcon = styled.span`
  display: flex;
  justify-content: center;
  width: 34px;
`;

const Workspace = styled.main`
  display: grid;
  grid-template-columns: 1060px minmax(0, 1fr);
  min-height: 0;
  background: #f8f8f8;
`;

const LeftColumn = styled.div`
  display: grid;
  grid-template-rows: minmax(0, 1fr) minmax(0, 1fr);
  min-height: 0;
  border-right: 3px solid #cfcfcf;
`;

const Panel = styled.section`
  display: flex;
  flex-direction: column;
  min-height: 0;
  border-top: ${(p) => (p.$split ? "4px solid #cfcfcf" : "0")};
`;

const ToolRow = styled.div`
  display: flex;
  flex: none;
  align-items: center;
  height: ${(p) => (p.$short ? 82 : 104)}px;
  padding: 0 41px 0 ${(p) => p.$indent}px;
  ${(p) => p.$short && "padding-bottom: 4px;"}
`;

const SlotGroup = styled.div`
  display: flex;
  margin-left: ${(p) => p.$before || 0}px;
  margin-right: ${(p) => p.$after || 0}px;
`;

const Slot = styled.button`
  display: flex;
  flex: none;
  align-items: center;
  justify-content: center;
  gap: 8px;
  width: ${(p) => (p.$wide ? 76 : 64)}px;
  height: 64px;
  margin-right: ${(p) => p.$after || 0}px;
  padding: 0;
  border: 0;
  border-radius: 10px;
  background: ${(p) => (p.$on ? "#e2e9f2" : "none")};
`;

const SearchLabel = styled.label`
  display: flex;
  align-items: center;
  gap: 12px;

  input {
    width: 200px;
    padding: 0;
    border: 0;
    outline: 0;
    background: none;
  }

  input::placeholder {
    color: #a9afb6;
    opacity: 1;
  }
`;

const TreeArea = styled.div`
  position: relative;
  flex: 1;
  min-height: 0;
  overflow: hidden;

  /* line between names and counts */
  &::after {
    content: "";
    position: absolute;
    top: 0;
    bottom: 0;
    right: 127px;
    width: 2px;
    background: linear-gradient(transparent, #b5b9be 10%, #b5b9be 85%, transparent);
  }
`;

const TreeList = styled.ul`
  margin: 0;
  padding: 0;
  font-size: 23px;
  list-style: none;
`;

const TreeRow = styled.li`
  display: flex;
  height: 40px;
  padding-left: ${(p) => p.$level * 40}px;
  padding-right: 28px;
`;

const Expander = styled.div`
  display: flex;
  flex: none;
  justify-content: center;
  width: 40px;
`;

const RowBody = styled.div`
  display: flex;
  flex: 1;
  align-items: center;
  gap: 4px;
  padding-left: 22px;
  border-radius: 8px;
  font-weight: ${(p) => (p.$bold ? 700 : 400)};
  background: ${(p) => (p.$selected ? "#d2e5f8" : "none")};
`;

const RowIcon = styled.span`
  display: flex;
  justify-content: center;
  width: 40px;
`;

const RowLabel = styled.span`
  flex: 1;
  white-space: nowrap;
`;

const Marked = styled.div`
  position: relative;

  &::after {
    content: "";
    position: absolute;
    z-index: 2;
    inset: ${(p) => p.$inset};
    border: 4px solid #fe0000;
    pointer-events: none;
  }
`;

const ScrollThumb = styled.div`
  position: absolute;
  right: 0;
  top: ${(p) => p.$top};
  width: 20px;
  height: ${(p) => p.$height};
  border-radius: 10px;
  background: #e3e3e3;
`;

const Browser = styled.section`
  display: flex;
  flex-direction: column;
  min-width: 0;
  min-height: 0;
`;

const BrowserTools = styled.div`
  flex: none;
  border-bottom: 2px solid #cfcfcf;
`;

const DocTitle = styled.h1`
  display: flex;
  gap: 22px;
  width: 824px;
  margin: 0 0 0 16px;
  font-size: 25px;
  font-weight: 700;
  white-space: nowrap;
`;

const SelectBox = styled.label`
  display: flex;
  flex: none;
  align-items: center;
  width: ${(p) => p.$width}px;
  height: 64px;
  padding-right: 7px;
  border: 2px solid #8a9096;
  border-radius: 12px;
  font-size: 23px;
  background: #fff;

  select {
    flex: 1;
    min-width: 0;
    height: 100%;
    padding: 0 0 0 12px;
    border: 0;
    appearance: none;
    background: none;
  }
`;

const SpellMark = styled.span`
  display: flex;
  flex-direction: column;
  align-items: flex-end;
  font-size: 20px;
  font-weight: 700;
  line-height: 16px;
  color: ${COLORS.ink};
`;

const Switch = styled.label`
  display: flex;
  align-items: center;

  input {
    position: absolute;
    margin: 0;
    opacity: 0;
  }
`;

const EditSwitch = styled(Switch)`
  width: 64px;
  height: 40px;
  padding-left: 4px;
  border-radius: 20px;
  background: #566270;
`;

const DaySwitch = styled(Switch)`
  width: 68px;
  height: 32px;
  border-radius: 16px;
  background: linear-gradient(to right, #3f69b4, #4f86e0);
`;

const DocArea = styled.div`
  flex: 1;
  min-height: 0;
  overflow: hidden;
  background: #f0f0f0;
`;

const Sheet = styled.article`
  position: relative;
  width: 1248px;
  height: 100%;
  background:
    linear-gradient(#f8f8f8, #f8f8f8) 342px 0 / 906px 100% no-repeat,
    linear-gradient(transparent, #e4e4e4 10%, #e4e4e4 90%, transparent) 258px 0 / 2px 100% no-repeat,
    linear-gradient(transparent, #e4e4e4 10%, #e4e4e4 90%, transparent) 292px 0 / 2px 100% no-repeat,
    linear-gradient(transparent, #e4e4e4 10%, #e4e4e4 90%, transparent) 340px 0 / 2px 100% no-repeat;
`;

const MoreButton = styled(PlainButton)`
  position: absolute;
  left: 22px;
  top: 31px;
`;

const ParaRow = styled.div`
  display: grid;
  grid-template-columns: 294px 46px 1fr;
  margin-bottom: 34px;
`;

// last line of the paragraph that is scrolled out at the top
const PrevRow = styled(ParaRow)`
  height: 8px;
  margin-bottom: 67px;
  overflow: hidden;

  & > :first-child {
    grid-column: 2;
  }
`;

const CodeStripe = styled.div`
  display: flex;
  align-items: center;
  justify-content: flex-end;
  gap: 16px;
  height: calc(100% - 4px);
  padding-right: 48px;
  color: ${(p) => p.$color};

  span {
    font-family: "Open Sans", sans-serif;
    font-size: 22px;
    font-weight: 300;
  }
`;

const Bracket = styled.i`
  display: flex;
  align-items: center;
  align-self: stretch;
  width: 8px;
  border: 4px solid currentColor;
  border-right: 0;

  &::before {
    content: "";
    flex: none;
    width: 16px;
    height: 16px;
    margin-left: -10px;
    border: 4px solid currentColor;
    border-radius: 50%;
    background: #f0f0f0;
  }
`;

const ParaNumber = styled.div`
  height: calc(100% - 4px);
  line-height: 34px;
  font-size: 21px;
  text-align: center;
  color: #3a6a96;
  background: #fff;
`;

const ParaText = styled.p`
  margin: 0;
  padding: 0 34px 0 20px;
  font: 32px/36px "Liberation Sans", Arial, sans-serif;
`;

const Coded = styled.mark`
  color: inherit;
  background: ${(p) => p.$color};
`;

const PrevText = styled(ParaText)`
  display: flex;
  align-items: flex-end;
  height: 8px;
`;

const DocThumb = styled.div`
  position: absolute;
  top: 2px;
  right: 4px;
  width: 20px;
  height: 78px;
  border-radius: 10px;
  background: #e2e2e2;
`;

const DocFrame = styled.div`
  position: absolute;
  inset: 29px 0 4px 123px;
  border: 4px solid #fe0000;
  pointer-events: none;
`;

const StatusBar = styled.footer`
  position: relative;
  display: flex;
  align-items: center;
  gap: 43px;
  padding-left: 28px;
  background: #f0f0f0;
  box-shadow: 0 -2px 4px #d8d8d8;

  & > svg {
    margin-left: -14px;
    margin-right: -32px;
  }
`;

const SegmentsTab = styled.button`
  position: absolute;
  left: 1314px;
  bottom: 0;
  display: flex;
  align-items: center;
  justify-content: center;
  gap: 10px;
  width: 326px;
  height: 65px;
  padding: 0 14px 0 6px;
  border: 0;
  border-radius: 20px 20px 0 0;
  background: #f8f8f8;
  box-shadow: 0 0 4px #d4d4d4;
`;
